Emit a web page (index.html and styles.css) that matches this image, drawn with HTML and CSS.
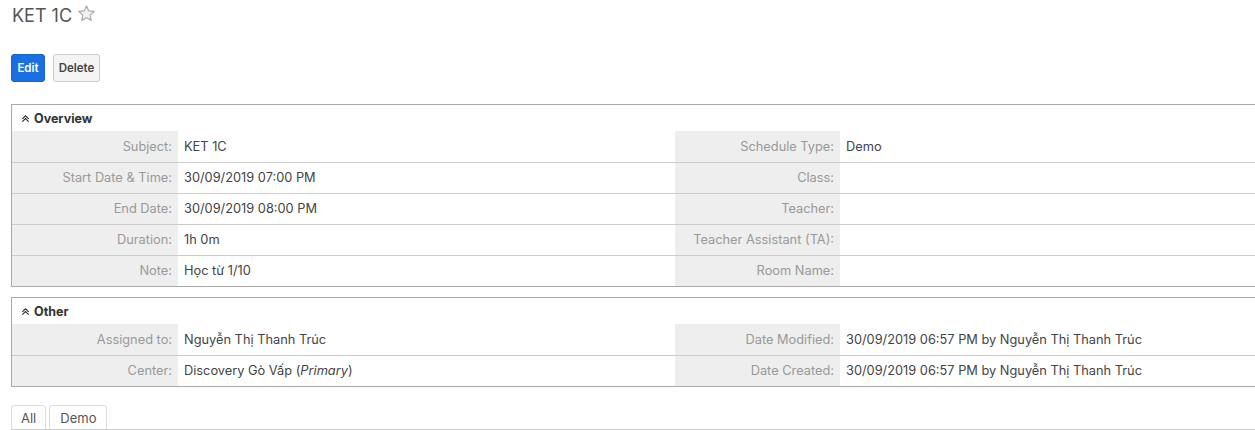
FILE: index.html
```html
<!DOCTYPE html>
<html>
<head>
<meta charset="utf-8">
<link rel="stylesheet" href="styles.css">
</head>
<body>
<div class="page">
  <h1 class="title">KET 1C <svg class="star" width="19" height="19" viewBox="0 0 24 24"><path d="M12 2.5l2.9 6.2 6.7.7-5 4.6 1.4 6.7L12 17.3l-6 3.4 1.4-6.7-5-4.6 6.7-.7z" fill="#f2f2f2" stroke="#aaa" stroke-width="1.5" stroke-linejoin="round"/></svg></h1>
  <div class="actions">
    <button class="btn btn-primary">Edit</button>
    <button class="btn btn-default">Delete</button>
  </div>

  <div class="panel">
    <div class="panel-head"><svg class="chev" width="9" height="9" viewBox="0 0 10 10"><path d="M1.5 5.5L5 2l3.5 3.5M1.5 8.5L5 5l3.5 3.5" fill="none" stroke="#333" stroke-width="1.3"/></svg>Overview</div>
    <div class="row"><div class="lbl">Subject:</div><div class="val">KET 1C</div><div class="lbl">Schedule Type:</div><div class="val">Demo</div></div>
    <div class="row"><div class="lbl">Start Date &amp; Time:</div><div class="val">30/09/2019 07:00 PM</div><div class="lbl">Class:</div><div class="val"></div></div>
    <div class="row"><div class="lbl">End Date:</div><div class="val">30/09/2019 08:00 PM</div><div class="lbl">Teacher:</div><div class="val"></div></div>
    <div class="row"><div class="lbl">Duration:</div><div class="val">1h 0m</div><div class="lbl">Teacher Assistant (TA):</div><div class="val"></div></div>
    <div class="row"><div class="lbl">Note:</div><div class="val">Học từ 1/10</div><div class="lbl">Room Name:</div><div class="val"></div></div>
  </div>

  <div class="panel">
    <div class="panel-head"><svg class="chev" width="9" height="9" viewBox="0 0 10 10"><path d="M1.5 5.5L5 2l3.5 3.5M1.5 8.5L5 5l3.5 3.5" fill="none" stroke="#333" stroke-width="1.3"/></svg>Other</div>
    <div class="row"><div class="lbl">Assigned to:</div><div class="val">Nguyễn Thị Thanh Trúc</div><div class="lbl">Date Modified:</div><div class="val">30/09/2019 06:57 PM by Nguyễn Thị Thanh Trúc</div></div>
    <div class="row"><div class="lbl">Center:</div><div class="val">Discovery Gò Vấp (<em>Primary</em>)</div><div class="lbl">Date Created:</div><div class="val">30/09/2019 06:57 PM by Nguyễn Thị Thanh Trúc</div></div>
  </div>

  <div class="tabs">
    <div class="tab">All</div>
    <div class="tab">Demo</div>
  </div>
</div>
</body>
</html>
```

FILE: styles.css
```css
html, body { margin: 0; padding: 0; overflow: hidden; background: #fff; }
body { font-family: Inter, Lato, "Liberation Sans", sans-serif; font-size: 12.8px; color: #444; }
.page { padding: 0 0 0 11px; width: 1330px; }
.title { margin: 0; padding: 3px 0 0 1px; font-size: 18px; font-weight: 400; color: #555; height: 25px; line-height: 22px; display: flex; align-items: center; gap: 5px; }
.star { margin-top: -4px; }
.actions { margin-top: 26px; display: flex; gap: 8px; }
.btn { font-family: inherit; font-size: 11.5px; font-weight: 600; height: 28px; border-radius: 3px; padding: 0 4px; cursor: pointer; }
.btn-primary { background: #1a6fe2; color: #fff; border: 1px solid #1765cf; width: 34px; }
.btn-default { background: #f4f4f4; color: #444; border: 1px solid #ccc; width: 47px; }
.panel { margin-top: 22px; border: 1px solid #aaa; }
.panel + .panel { margin-top: 10px; }
.panel-head { height: 26px; display: flex; align-items: center; padding-left: 9px; font-weight: 700; font-size: 12.5px; color: #333; gap: 4px; }
.row { display: grid; grid-template-columns: 166px 497px 165px 1fr; height: 30px; border-top: 1px solid #ccc; }
.panel-head + .row { border-top: none; height: 31px; }
.row .lbl, .row .val { display: flex; align-items: center; padding-bottom: 1px; }
.lbl { background: #eee; color: #999; justify-content: flex-end; padding-right: 6px; }
.val { padding-left: 6px; color: #444; }
.tabs { margin-top: 18px; display: flex; gap: 3px; border-bottom: 1px solid #ccc; height: 24px; }
.tab { border: 1px solid #ddd; border-bottom: none; border-radius: 4px 4px 0 0; padding: 0 9px; display: flex; align-items: center; color: #555; font-size: 13px; }
.tab + .tab { padding: 0 10px; }
```
